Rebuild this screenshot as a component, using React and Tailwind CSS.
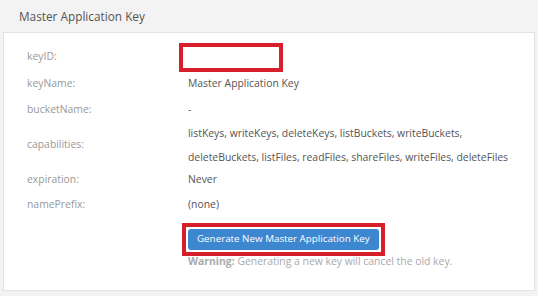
export default function App() {
  const rows = [
    ["keyName:", "Master Application Key"],
    ["bucketName:", "-"],
  ];
  return (
    <div className="w-[538px] h-[296px] bg-[#f3f3f3] pt-[1px] px-[3px] overflow-hidden" style={{ fontFamily: '"Open Sans", sans-serif' }}>
      <div className="h-[31px] flex items-center pl-[16px] text-[11.8px] text-[#555]">Master Application Key</div>
      <div className="bg-white border border-[#e2e2e2] h-[259px] pl-[23px] pt-[10px] text-[10.4px]">
        <div className="flex items-center h-[28px]">
          <div className="w-[152px] text-[#999]">keyID:</div>
          <div className="w-[104px] h-[29px] border-[4px] border-[#d71f2b]"></div>
        </div>
        {rows.map(([k, v]) => (
          <div key={k} className="flex items-center h-[26px]">
            <div className="w-[161px] text-[#999]">{k}</div>
            <div className="text-[#555]">{v}</div>
          </div>
        ))}
        <div className="flex items-center h-[44px]">
          <div className="w-[161px] text-[#999]">capabilities:</div>
          <div className="text-[#555] leading-[24px]">
            listKeys, writeKeys, deleteKeys, listBuckets, writeBuckets,
            <br />
            deleteBuckets, listFiles, readFiles, shareFiles, writeFiles, deleteFiles
          </div>
        </div>
        <div className="flex items-center h-[26px]">
          <div className="w-[161px] text-[#999]">expiration:</div>
          <div className="text-[#555]">Never</div>
        </div>
        <div className="flex items-center h-[24px]">
          <div className="w-[161px] text-[#999]">namePrefix:</div>
          <div className="text-[#555]">(none)</div>
        </div>
        <div className="ml-[155px] mt-[6px]">
          <div className="inline-flex border-[4px] border-[#d71f2b] px-[2px] py-[2px]">
            <div className="bg-[#3d87d1] text-white rounded-[3px] px-[9px] h-[21px] flex items-center text-[9.8px]">
              Generate New Master Application Key
            </div>
          </div>
          <div className="text-[#aaa] -mt-[2px] ml-[6px]">
            <span className="font-bold">Warning:</span> Generating a new key will cancel the old key.
          </div>
        </div>
      </div>
    </div>
  );
}
